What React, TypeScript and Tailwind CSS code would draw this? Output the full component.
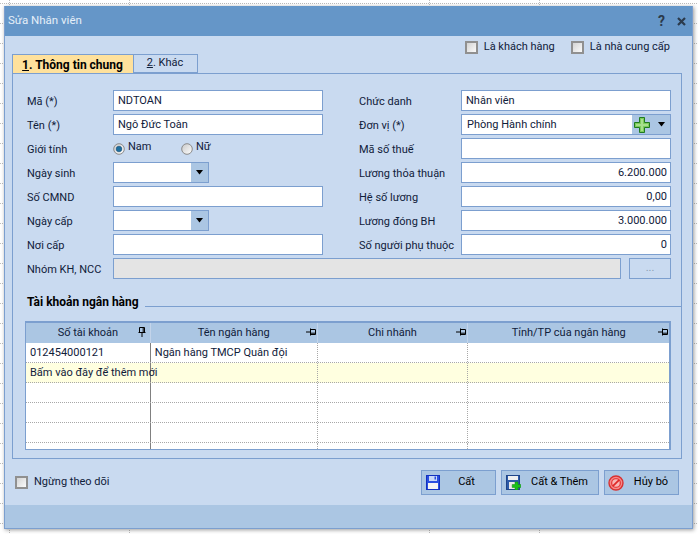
import React from "react";

const B = "border border-[#7c9fcf]";

function Check({ label }: { label: string }) {
  return (
    <div className="flex items-center gap-[6px]">
      <div className="w-[13px] h-[13px] border-2 border-[#909090] bg-gradient-to-br from-[#d4d4d4] to-[#fafafa]" />
      <span className="whitespace-nowrap">{label}</span>
    </div>
  );
}

function Radio({ on, label, w }: { on?: boolean; label: string; w: string }) {
  return (
    <div className={"flex items-center gap-[3px] " + w}>
      <svg width="12" height="12" viewBox="0 0 12 12">
        <defs>
          <linearGradient id="rg" x1="0" y1="0" x2="1" y2="1">
            <stop offset="0" stopColor="#c8c8c8" />
            <stop offset="1" stopColor="#ffffff" />
          </linearGradient>
        </defs>
        <circle cx="6" cy="6" r="5.3" fill="url(#rg)" stroke="#8a8a8a" />
        {on && <circle cx="6" cy="6" r="2.8" fill="#1f6f9f" stroke="#0d4a78" strokeWidth="0.6" />}
      </svg>
      <span className="relative -top-[1px]">{label}</span>
    </div>
  );
}

function Arrow() {
  return (
    <svg width="9" height="5" viewBox="0 0 9 5">
      <path d="M1 0h7L4.5 4.5z" fill="#000" />
    </svg>
  );
}

function Field({ label, value, right, w, combo }: { label: string; value?: string; right?: boolean; w: string; combo?: boolean }) {
  return (
    <div className="flex h-[21px]">
      <span className={"pt-[4px] whitespace-nowrap " + (right ? "w-[102px]" : "w-[86px]")}>{label}</span>
      <div className={"flex h-[21px] bg-white " + B + " " + w}>
        <span className={"flex-1 px-[4px] leading-[19px] " + (value && /^[\d.,]+$/.test(value) ? "text-right pr-[3px]" : "")}>{value}</span>
        {combo && (
          <div className="w-[17px] bg-[#abc6e3] flex items-center justify-center">
            <Arrow />
          </div>
        )}
      </div>
    </div>
  );
}

function Pin({ vertical }: { vertical?: boolean }) {
  return vertical ? (
    <svg width="8" height="10" viewBox="0 0 8 10" className="shrink-0">
      <path d="M1.5 .5h5v5h-5zM.5 5.5h7M4 6v4M5.2 1v4" fill="none" stroke="#000" />
    </svg>
  ) : (
    <svg width="10" height="8" viewBox="0 0 10 8" className="shrink-0">
      <path d="M4.5 1.5h5v5h-5zM4.5 .5v7M0 4h4M5 5.2h4" fill="none" stroke="#000" />
    </svg>
  );
}

const cols = ["w-[125px]", "w-[167px]", "w-[151px]", "w-[201px]"];

function Head({ label, i, vertical }: { label: string; i: number; vertical?: boolean }) {
  return (
    <div className={"relative flex items-center justify-center h-full border-r border-r-[#c3d4ea] last:border-r-0 " + cols[i]}>
      <span className="pt-[1px]">{label}</span>
      <span className={"absolute " + (vertical ? "top-[4px] right-[4px]" : "top-[5px] right-[1px]")}>
        <Pin vertical={vertical} />
      </span>
    </div>
  );
}

function Row({ a, b, yellow, short }: { a?: string; b?: string; yellow?: boolean; short?: boolean }) {
  const h = short ? "h-[6px]" : "h-[20px]";
  const bb = short ? "" : "border-b border-dotted border-b-[#a8a8a8]";
  return (
    <div className={"flex " + h + " " + bb + " " + (yellow ? "bg-[#ffffe0]" : "bg-white")}>
      <div className={"pl-[4px] border-r border-r-[#808080] whitespace-nowrap leading-[20px] " + cols[0]}>{a}</div>
      <div className={"px-[4px] border-r border-dotted border-r-[#a8a8a8] leading-[20px] " + cols[1]}>{b}</div>
      <div className={"border-r border-dotted border-r-[#a8a8a8] " + cols[2]} />
      <div className={cols[3]} />
    </div>
  );
}

function BtnShell({ w, children }: { w: string; children: React.ReactNode }) {
  return (
    <button className={"flex items-center h-[25px] bg-[#abc6e3] " + B + " " + w}>{children}</button>
  );
}

function SaveIcon() {
  return (
    <svg width="14" height="15" viewBox="0 0 14 15" className="ml-[4px] shrink-0">
      <rect x=".5" y=".5" width="13" height="14" fill="#2a4fe0" stroke="#1030c0" />
      <rect x="3" y="1" width="8" height="5" fill="#c8d8f8" />
      <rect x="8.5" y="1.5" width="1.5" height="3" fill="#2a4fe0" />
      <rect x="2" y="8" width="10" height="6" fill="#f4f4f4" />
    </svg>
  );
}

function SavePlusIcon() {
  return (
    <svg width="15" height="15" viewBox="0 0 15 15" className="ml-[4px] shrink-0">
      <rect x=".5" y=".5" width="13" height="14" fill="#2d5aa8" stroke="#1f4488" />
      <rect x="2" y="1" width="10" height="4" fill="#f0f0f0" />
      <rect x="3" y="7" width="8" height="7" fill="#e8e8e8" />
      <path d="M9 7h3v2.5h2.8v3H12V15H9v-2.5H6.2v-3H9z" fill="#18c018" stroke="#0f8a0f" strokeWidth=".5" />
    </svg>
  );
}

function CancelIcon() {
  return (
    <svg width="16" height="16" viewBox="0 0 16 16" className="ml-[3px] shrink-0">
      <circle cx="8" cy="8" r="7" fill="#f58a8a" stroke="#d83030" strokeWidth="1.4" />
      <circle cx="8" cy="8" r="4.4" fill="#f8b8b8" stroke="#e84040" strokeWidth="1.4" />
      <path d="M4.8 11.2l6.4-6.4" stroke="#e02828" strokeWidth="1.8" />
    </svg>
  );
}

export default function App() {
  return (
    <div
      className="relative w-[698px] h-[534px] overflow-hidden bg-white text-[11px] text-[#10203a] pl-[4px] pt-[6px]"
      style={{ fontFamily: 'Roboto, "Liberation Sans", Arial, sans-serif' }}
    >
      <svg width="698" height="534" className="absolute left-0 top-0">
        <g stroke="#bdbdbd" strokeDasharray="1 1" fill="none">
          <path d="M0 3.5h698" />
          {[9, 129, 429, 539].map((x) => (
            <path key={x} d={`M${x + 0.5} 0v534`} />
          ))}
          {Array.from({ length: 27 }, (_, i) => (
            <path key={i} d={`M0 ${3.5 + i * 20}h698`} />
          ))}
        </g>
      </svg>

      <div className="relative w-[689px] h-[523px] flex flex-col border border-[#7c9fcf] bg-[#c9daf0] shadow-[1px_1px_4px_rgba(0,0,0,0.4)]">
        <div className="h-[30px] -mt-[1px] bg-[#6596c8] flex items-center justify-between pl-[3px] pr-[6px] text-[#e6eff8] text-[11.5px] shrink-0">
          <span>Sửa Nhân viên</span>
          <div className="flex items-center gap-[12px] font-bold text-[#2b3a4c] text-[14px]">
            <span>?</span>
            <svg width="9" height="9" viewBox="0 0 9 9"><path d="M1 1l7 7M8 1L1 8" stroke="#2b3a4c" strokeWidth="2.2" /></svg>
          </div>
        </div>

        <div className="flex-1 flex flex-col">
          <div className="h-[18px] flex justify-end items-start pt-[4px] gap-[16px] pr-[22px] shrink-0 -mt-[1px]">
            <Check label="Là khách hàng" />
            <Check label="Là nhà cung cấp" />
          </div>

          <div className="ml-[7px] mt-[1px] flex h-[20px] shrink-0">
            <div className="w-[122px] h-[20px] bg-[#ffe19c] border border-b-0 border-[#7c9fcf] font-bold text-[12px] flex items-center justify-center text-black pr-[1px]">
              <span><u>1</u>. Thông tin chung</span>
            </div>
            <div className="w-[64px] h-[19px] border border-l-0 border-[#7c9fcf] flex items-center justify-center pr-[1px]">
              <span><u>2</u>. Khác</span>
            </div>
          </div>

          <div className="ml-[7px] w-[670px] h-[386px] -mt-[1px] border border-[#7c9fcf] shrink-0">
            <div className="pl-[14px] pt-[16px] flex gap-[36px]">
              <div className="w-[296px] flex flex-col gap-[3px]">
                <Field label="Mã (*)" value="NDTOAN" w="w-[210px]" />
                <Field label="Tên (*)" value="Ngô Đức Toàn" w="w-[210px]" />
                <div className="flex h-[21px]">
                  <span className="w-[86px] pt-[4px]">Giới tính</span>
                  <Radio on label="Nam" w="w-[68px]" />
                  <Radio label="Nữ" w="w-[40px]" />
                </div>
                <Field label="Ngày sinh" w="w-[96px]" combo />
                <Field label="Số CMND" w="w-[210px]" />
                <Field label="Ngày cấp" w="w-[96px]" combo />
                <Field label="Nơi cấp" w="w-[210px]" />
              </div>
              <div className="w-[312px] flex flex-col gap-[3px]">
                <Field right label="Chức danh" value="Nhân viên" w="w-[210px]" />
                <div className="flex h-[21px]">
                  <span className="w-[102px] pt-[4px]">Đơn vị (*)</span>
                  <div className={"flex w-[210px] h-[21px] bg-white " + B}>
                    <span className="flex-1 px-[5px] leading-[19px]">Phòng Hành chính</span>
                    <div className="w-[38px] bg-[#abc6e3] flex items-center pl-[2px] gap-[7px]">
                      <svg width="16" height="16" viewBox="0 0 16 16">
                        <path d="M5.5 .5h5v5h5v5h-5v5h-5v-5h-5v-5h5z" fill="#7ccb5a" stroke="#1f7a1f" />
                        <path d="M7 2h2v5h5v2H9v5H7V9H2V7h5z" fill="#a6e08c" />
                      </svg>
                      <Arrow />
                    </div>
                  </div>
                </div>
                <Field right label="Mã số thuế" w="w-[210px]" />
                <Field right label="Lương thỏa thuận" value="6.200.000" w="w-[210px]" />
                <Field right label="Hệ số lương" value="0,00" w="w-[210px]" />
                <Field right label="Lương đóng BH" value="3.000.000" w="w-[210px]" />
                <Field right label="Số người phụ thuộc" value="0" w="w-[210px]" />
              </div>
            </div>

            <div className="pl-[14px] mt-[3px] flex h-[21px]">
              <span className="w-[86px] pt-[4px] whitespace-nowrap">Nhóm KH, NCC</span>
              <div className={"w-[508px] h-[21px] bg-[#e4e4e4] " + B} />
              <div className={"ml-[8px] w-[42px] h-[21px] flex items-center justify-center text-[#8a9ab0] " + B}>...</div>
            </div>

            <div className="mt-[14px] pl-[14px] flex items-center h-[18px]">
              <span className="font-bold text-[12px] text-black whitespace-nowrap">Tài khoản ngân hàng</span>
              <div className="flex-1 h-px bg-[#7c9fcf] ml-[6px] mt-[8px]" />
            </div>

            <div className="ml-[12px] mt-[10px] w-[646px] border border-[#7c9fcf] border-r-2 border-t-2 box-border">
              <div className="flex h-[20px] bg-[#abc6e3]">
                <Head label="Số tài khoản" i={0} vertical />
                <Head label="Tên ngân hàng" i={1} />
                <Head label="Chi nhánh" i={2} />
                <Head label="Tỉnh/TP của ngân hàng" i={3} />
              </div>
              <Row a="012454000121" b="Ngân hàng TMCP Quân đội" />
              <Row a="Bấm vào đây để thêm mới" yellow />
              <Row />
              <Row />
              <Row />
              <Row short />
            </div>
          </div>

          <div className="flex-1 flex items-start pl-[10px] pr-[12px] pt-[11px] justify-between">
            <div className="pt-[4px]">
              <Check label="Ngừng theo dõi" />
            </div>
            <div className="flex gap-[5px] mr-[1px]">
              <BtnShell w="w-[75px]">
                <SaveIcon />
                <span className="flex-1 text-center pr-[2px] text-black">Cất</span>
              </BtnShell>
              <BtnShell w="w-[98px]">
                <SavePlusIcon />
                <span className="flex-1 text-center text-black">Cất &amp; Thêm</span>
              </BtnShell>
              <BtnShell w="w-[75px]">
                <CancelIcon />
                <span className="flex-1 text-center text-black">Hủy bỏ</span>
              </BtnShell>
            </div>
          </div>

          <div className="h-[23px] bg-[#abc6e3] shrink-0" />
        </div>
      </div>
    </div>
  );
}
